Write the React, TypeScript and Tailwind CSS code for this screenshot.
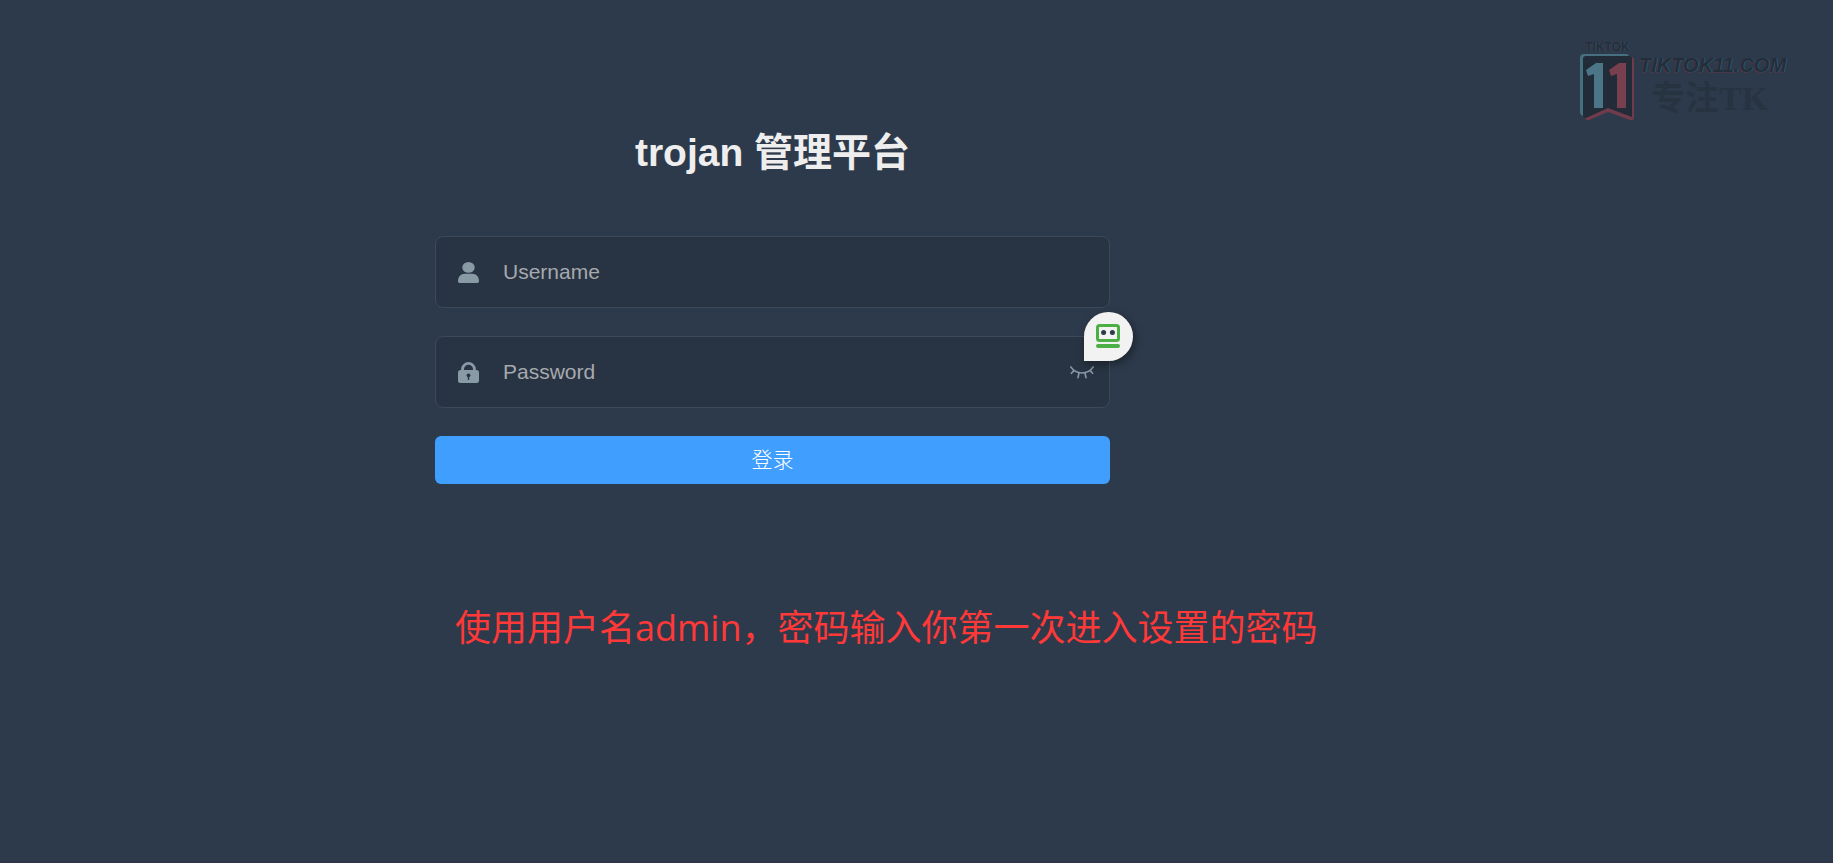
import { useState } from "react";

function UserIcon() {
  return (
    <svg viewBox="0 0 21 21" className="h-[21px] w-[21px] shrink-0" fill="currentColor" aria-hidden="true">
      <ellipse cx="10.5" cy="5.4" rx="6.2" ry="5.400" />
      <path d="M0 19C0 14.600 3.200 11.800 6.600 11.800h7.800c3.400 0 6.600 2.800 6.600 7.200 0 1.400-.8 2-2 2H2C.8 21 0 20.400 0 19z" />
    </svg>
  );
}

function LockIcon() {
  return (
    <svg viewBox="0 0 21 21" className="h-[21px] w-[21px] shrink-0" aria-hidden="true">
      <path d="M4.500 8.500V7.400a6 6 0 0 1 12 0v1.100" fill="none" stroke="currentColor" strokeWidth="2.800" />
      <rect y="8" width="21" height="13" rx="2.500" fill="currentColor" />
      <circle cx="10.500" cy="13.300" r="1.900" fill="#283443" />
      <path d="M9.800 14h1.400v4H9.800z" fill="#283443" />
    </svg>
  );
}

function ClosedEyeIcon() {
  return (
    <svg
      viewBox="0 0 24 13"
      className="h-[13px] w-6"
      fill="none"
      stroke="currentColor"
      strokeWidth="1.600"
      strokeLinecap="round"
      aria-hidden="true"
    >
      <path d="M.8.900C6 9 18 9 23.200.900M3.900 4.600 1.400 7.300M9 7l-1 4.700M15 7l1 4.700M20.100 4.600l2.500 2.700" />
    </svg>
  );
}

function RobotIcon() {
  return (
    <svg viewBox="0 0 24 24" className="h-6 w-6" aria-hidden="true">
      <rect x="1.500" y="1.500" width="21" height="15" rx="2" fill="none" stroke="#4caf45" strokeWidth="3" />
      <circle cx="7.600" cy="8.500" r="2.500" fill="#2d3a4b" />
      <circle cx="16.400" cy="8.500" r="2.500" fill="#2d3a4b" />
      <rect y="20" width="24" height="4" rx="2" fill="#4caf45" />
    </svg>
  );
}

function Watermark() {
  return (
    <div className="pointer-events-none absolute top-[41px] right-[46px] flex gap-1 text-[#242e3b]">
      <div className="flex w-[55px] flex-col items-center">
        <span className="font-['Liberation_Sans',sans-serif] text-xs leading-[13px] font-bold [text-shadow:1px_0_#2d4a5a,-1px_0_#403a4b]">
          TIKTOK
        </span>
        <svg viewBox="0 0 55 67" className="h-[67px] w-[55px]" aria-hidden="true">
          <path d="M4 0h42q3 0 3 3v58L27 52 3 62Q0 61 0 58V4Q0 0 4 0z" fill="#46707f" />
          <path d="M8 3h43q3 0 3 3v57q0 4-4 3L28 58 9 66q-4 1-4-3z" fill="#703b4a" />
          <path d="M6 2h43q3 0 3 3v58L28 54 6 64Q3 64 3 60V5q0-3 3-3z" fill="#222b38" />
          <path d="M16 9h7v45h-9V20l-6 2-2-6z" fill="#4a7688" />
          <path d="M39 9h7v45h-9V20l-6 2-2-6z" fill="#783f4e" />
        </svg>
      </div>
      <div className="flex w-[148px] flex-col gap-0.5 pt-3">
        <span className="font-['Liberation_Sans',sans-serif] text-xl leading-6 font-bold whitespace-nowrap italic [text-shadow:1px_0_#29596b,-1px_1px_#4d3748]">
          TIKTOK11.COM
        </span>
        <span className="pl-3 font-['Liberation_Serif','Noto_Sans_CJK_SC',serif] text-[34px] leading-10 font-bold text-[#283341]">
          专注TK
        </span>
      </div>
    </div>
  );
}

export default function App() {
  const [username, setUsername] = useState("");
  const [password, setPassword] = useState("");
  const [visible, setVisible] = useState(false);

  return (
    <div className="relative min-h-screen border-b-2 border-[#2f3549] bg-[#2d3a4b] font-['Liberation_Sans','Noto_Sans_CJK_SC',sans-serif]">
      <main className="pt-[129px] pl-[435px]">
        <form className="w-full max-w-[675px]" onSubmit={(e) => e.preventDefault()}>
          <h1 className="mb-[59px] text-center text-[39px] leading-12 font-bold text-[#eeeeee]">trojan 管理平台</h1>

          <div className="flex flex-col gap-7">
            <div className="flex h-[72px] items-center gap-6 rounded-lg border border-[#3e4957] bg-[#283443] px-[22px] text-[#889aa4]">
              <label htmlFor="username" aria-label="Username">
                <UserIcon />
              </label>
              <input
                id="username"
                type="text"
                value={username}
                onChange={(e) => setUsername(e.target.value)}
                placeholder="Username"
                className="h-full min-w-0 flex-1 bg-transparent text-[21px] text-white outline-none placeholder:text-[#a6a9ad]"
              />
            </div>

            <div className="relative flex h-[72px] items-center gap-6 rounded-lg border border-[#3e4957] bg-[#283443] pr-[15px] pl-[22px] text-[#889aa4]">
              <label htmlFor="password" aria-label="Password">
                <LockIcon />
              </label>
              <input
                id="password"
                type={visible ? "text" : "password"}
                value={password}
                onChange={(e) => setPassword(e.target.value)}
                placeholder="Password"
                className="h-full min-w-0 flex-1 bg-transparent text-[21px] text-white outline-none placeholder:text-[#a6a9ad]"
              />
              <button type="button" aria-label="Toggle password" onClick={() => setVisible(!visible)}>
                <ClosedEyeIcon />
              </button>
              <button
                type="button"
                aria-label="Fill password"
                className="absolute -top-[25px] -right-6 flex h-[49px] w-[49px] items-center justify-center rounded-full rounded-bl-none bg-[#f2f2f2] pr-px pb-px shadow-[2px_3px_8px_rgba(0,0,0,0.4)]"
              >
                <RobotIcon />
              </button>
            </div>

            <button
              type="submit"
              className="h-12 w-full rounded-md bg-[#409eff] text-[21px] font-light text-white hover:bg-[#66b1ff]"
            >
              登录
            </button>
          </div>
        </form>

        <p className="mt-[120px] pl-5 font-['Open_Sans','Noto_Sans_CJK_SC',sans-serif] text-4xl leading-12 text-[#ff3838]">
          使用用户名admin，密码输入你第一次进入设置的密码
        </p>
      </main>

      <Watermark />
    </div>
  );
}
